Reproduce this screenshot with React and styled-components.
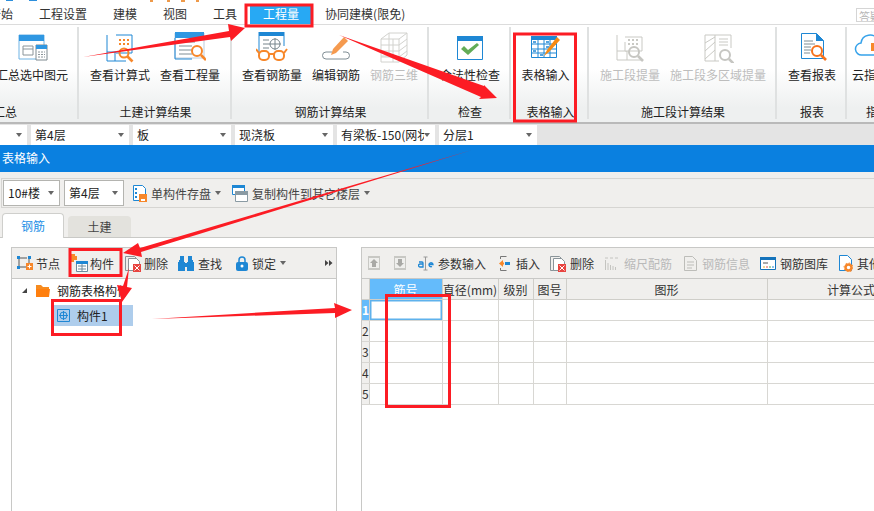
import React from "react";
import styled, { createGlobalStyle } from "styled-components";

const Global = createGlobalStyle`
  html, body { margin: 0; padding: 0; background: #fff; }
  body { font-family: "Noto Sans CJK SC", "Noto Sans", sans-serif; font-size: 12px; color: #222; }
`;

const Page = styled.div`
  position: relative; width: 874px; height: 511px; overflow: hidden; display: flex; flex-direction: column; background: #fff;
`;
const MenuBar = styled.div`
  height: 24px; flex: none; display: flex; align-items: flex-end; border-bottom: 1px solid #dcdcdc; background: #fff; position: relative; padding-left: 0;
`;
const MenuItem = styled.div`
  height: 20px; line-height: 19px; padding: 0 13px; white-space: nowrap; flex: none;
  color: ${p => (p.$active ? "#fff" : "#333")};
  background: ${p => (p.$active ? "#27a9f4" : "transparent")};
  margin-left: ${p => p.$ml || 0}px;
`;
const HelpBox = styled.div`
  margin-left: auto; margin-right: -6px; margin-bottom: 2px; width: 24px; height: 14px; border: 1px solid #d5d5d5; color: #b5b5b5; font-size: 11px; line-height: 14px; overflow: hidden; white-space: nowrap; padding-left: 2px; box-sizing: border-box;
`;
const Ribbon = styled.div`
  height: 97px; flex: none; display: flex; margin-left: -69px; background: linear-gradient(#fff 0%, #fff 45%, #eef0f0 85%, #eef0f0 100%);
`;
const Group = styled.div`
  width: ${p => p.$w}px; flex: none; box-sizing: border-box; position: relative; display: flex; flex-direction: column; align-items: center;
  &::after { content: ""; position: absolute; top: 2px; bottom: 3px; right: 0; width: ${p => (p.$last ? 0 : 2)}px; background: #dfe1e1; }
`;
const GroupActions = styled.div`
  flex: 1; width: 100%; box-sizing: border-box; display: flex; padding-top: 6px; padding-right: ${p => p.$pr || 0}px;
  justify-content: ${p => p.$justify || "center"};
`;
const GroupLabel = styled.div`
  height: 18px; line-height: 18px; margin-bottom: 1px; white-space: nowrap; padding-left: ${p => p.$pl || 0}px;
`;
const RibbonBtn = styled.div`
  padding: 0 5px; display: flex; flex-direction: column; align-items: center; flex: none; white-space: nowrap;
  color: ${p => (p.$off ? "#bdbdbd" : "#222")};
  svg { display: block; width: 32px; height: 32px; }
  span { margin-top: 4px; line-height: 16px; }
`;
const SelectorBar = styled.div`
  height: 23px; flex: none; box-sizing: border-box; padding-top: 3px; display: flex; gap: 4px; margin-left: -71px;
  background-image: linear-gradient(#b9b9b9 0, #b9b9b9 2px, #e4e4e4 2px);
`;
const Combo = styled.div`
  width: ${p => p.$w || 98}px; flex: none; box-sizing: border-box; background: #fff; height: ${p => p.$h || 20}px; line-height: ${p => (p.$h || 20) - 2}px; padding-left: 4px;
  display: flex; align-items: center; justify-content: space-between; padding-right: 5px; white-space: nowrap; overflow: hidden;
  border: ${p => (p.$bordered ? "1px solid #b4b4b0" : "none")};
  span { overflow: hidden; }
`;
const Caret = styled.i`
  flex: none; display: inline-block; width: 0; height: 0; border-left: 3.5px solid transparent; border-right: 3.5px solid transparent; border-top: 4px solid #666; margin-left: ${p => p.$ml || 0}px;
`;
const TitleBar = styled.div`
  height: 27px; flex: none; background: #0a80e0; color: #fff; line-height: 26px; padding-left: 2px;
`;
const Work = styled.div`
  flex: 1; background: #f0efed; padding-top: 6px; display: flex; flex-direction: column; min-height: 0;
`;
const SubToolbar = styled.div`
  height: 30px; margin-left: 1px; box-sizing: border-box; border: 1px solid #d6d5d2; border-right: none; display: flex; align-items: center; gap: 4px; padding-left: 1px;
`;
const SubItem = styled.div`
  display: flex; align-items: center; white-space: nowrap; margin-left: ${p => p.$ml || 0}px; color: #444;
  svg { margin-right: 4px; display: block; }
`;
const Tabs = styled.div`
  height: 30px; flex: none; display: flex; align-items: flex-end; gap: 4px; padding-left: 2px; box-sizing: border-box; border-bottom: 1px solid #c9c9c6;
`;
const Tab = styled.div`
  width: ${p => (p.$on ? 62 : 63)}px; height: ${p => (p.$on ? 25 : 21)}px; box-sizing: border-box; text-align: center; line-height: ${p => (p.$on ? 24 : 21)}px;
  border-radius: 4px 4px 0 0; color: ${p => (p.$on ? "#1d8fe6" : "#444")};
  background: ${p => (p.$on ? "#fff" : "#e3e2dd")};
  border: ${p => (p.$on ? "1px solid #cfcfcc" : "none")}; border-bottom: none;
  margin-bottom: ${p => (p.$on ? -1 : 0)}px;
`;
const TabBody = styled.div`
  flex: 1; background: #fff; display: flex; padding: 9px 0 0 11px; gap: 24px; min-height: 0;
`;
const LeftPanel = styled.div`
  width: 326px; flex: none; box-sizing: border-box; border: 1px solid #c8c8c6; border-bottom: none; display: flex; flex-direction: column;
`;
const RightPanel = styled.div`
  flex: 1; box-sizing: border-box; border: 1px solid #c8c8c6; border-right: none; border-bottom: none; display: flex; flex-direction: column; min-width: 0; overflow: hidden;
`;
const PanelToolbar = styled.div`
  height: 31px; flex: none; box-sizing: border-box; background: #f0efed; border-bottom: 1px solid #c8c8c6; display: flex; align-items: center; white-space: nowrap; padding-left: ${p => p.$pl}px; overflow: hidden;
`;
const Tool = styled.div`
  display: flex; align-items: center; flex: none; margin-left: ${p => p.$ml || 0}px; color: ${p => (p.$off ? "#b9b9b9" : "#333")};
  svg { display: block; flex: none; margin-right: ${p => (p.$gap === undefined ? 4 : p.$gap)}px; }
`;
const More = styled.svg`
  margin-left: auto; margin-right: 3px; display: block; flex: none;
`;
const Tree = styled.div`
  flex: 1; padding-top: 1px; background: #fff;
`;
const TreeRow = styled.div`
  height: 21px; display: flex; align-items: center; white-space: nowrap; padding-left: ${p => p.$pl}px; color: #222;
`;
const TreeLabel = styled.span`
  margin-left: 7px;
`;
const Expander = styled.i`
  width: 0; height: 0; margin-right: 9px; border-left: 5px solid transparent; border-bottom: 5px solid #444; display: block;
`;
const Selected = styled.div`
  width: 79px; height: 21px; margin: 4px 0 0 42px; background: #aecdec; display: flex; align-items: center; padding-left: 3px; box-sizing: border-box;
  svg { margin-right: 7px; display: block; }
`;
const Grid = styled.table`
  border-collapse: collapse; table-layout: fixed; width: 573px; flex: none; background: #fff;
  th { height: 20px; padding: 0; background: #f0efed; font-weight: 400; color: #333; border-right: 1px solid #cfcec9; border-bottom: 1px solid #cfcec9; white-space: nowrap; overflow: hidden; }
  td { height: 20px; padding: 0; border-right: 1px solid #d8d7d3; border-bottom: 1px solid #d8d7d3; }
`;
const GridCol = styled.col`
  width: ${p => p.$w}px;
`;
const HeadActive = styled.th`
  && { background: #64bbfb; color: #fff; }
`;
const RowHead = styled.td`
  && { background: ${p => (p.$on ? "#64bbfb" : "#f0efed")}; color: ${p => (p.$on ? "#fff" : "#333")}; font-weight: ${p => (p.$on ? 700 : 400)}; overflow: hidden; font-size: 12px; line-height: 20px; border-right: 1px solid #cfcec9; }
`;
const ActiveCell = styled.td`
  && { box-shadow: inset 0 0 0 1.5px #5fb2ec; }
`;
const Overlay = styled.svg`
  position: absolute; left: 0; top: 0; width: 874px; height: 511px; pointer-events: none;
`;

const B = "#1e87d4", O = "#f7872a", G = "#c9c9c4";

const IcoSummary = () => (
  <svg viewBox="0 0 32 32">
    <path d="M3 4h25v24H3z" fill="#fff" stroke="#6fb3e4" />
    <path d="M3 4h25v6H3z" fill="#2f97e2" />
    <path d="M7 15h10v9H7z" fill="none" stroke="#8a9499" /><path d="M7 18h10" stroke="#8a9499" />
    <path d="M20 14h11v15H20z" fill="#fff" stroke="#7e8a90" /><path d="M20 14h11v4H20z" fill="#2f97e2" />
    <path d="M22 21h7M22 23.5h7M22 26h7" stroke="#8a9499" strokeDasharray="2 1" />
  </svg>
);
const Lens = ({ x, y, c = O, r = 4.5 }) => (
  <g fill="none" stroke={c} strokeWidth="2">
    <circle cx={x} cy={y} r={r} /><path d={`M${x + r - 1} ${y + r - 1}l5 5`} strokeWidth="2.6" />
  </g>
);
const IcoCalc = () => (
  <svg viewBox="0 0 32 32">
    <path d="M3 4v26h19M3 21h11M11 21v9" fill="none" stroke={B} />
    <path d="M12 4h16v18H12" fill="#fff" stroke={B} />
    <path d="M15 8h2v2h-2zM19 8h2v2h-2zM23 8h2v2h-2zM15 12h2v2h-2zM19 12h2v2h-2zM23 12h2v2h-2z" fill={O} />
    <Lens x={20} y={22} />
  </svg>
);
const IcoQty = () => (
  <svg viewBox="0 0 32 32">
    <path d="M1 2h29v25H1z" fill="#fff" stroke="#bcd" />
    <path d="M1 1h29v6H1z" fill="#2f97e2" />
    <path d="M5 11h16M5 15h13M5 19h13M5 23h13" stroke="#7f8d94" />
    <path d="M1 7v21h17" fill="none" stroke={B} />
    <Lens x={23} y={20} r={5} />
  </svg>
);
const IcoRebarQty = () => (
  <svg viewBox="0 0 32 32">
    <path d="M3 2h25v22H3z" fill="#fff" />
    <path d="M3 1h25v4H3z" fill={B} /><path d="M3 1v22M28 1v14" stroke={B} />
    <path d="M7 9h6M7 13h6M7 17h6" stroke="#77858c" />
    <circle cx="19" cy="13" r="5" fill="none" stroke="#77858c" /><path d="M19 7v12M13 13h12" stroke="#77858c" />
    <rect x="3" y="20" width="10" height="9" rx="4" fill="#fff" stroke={O} strokeWidth="2" />
    <rect x="18" y="20" width="10" height="9" rx="4" fill="#fff" stroke={O} strokeWidth="2" />
    <path d="M13 23h5M3 22L0 18M28 22l3-4" stroke={O} strokeWidth="2" />
  </svg>
);
const IcoEdit = () => (
  <svg viewBox="0 0 32 32">
    <path d="M12 21H6a3.5 3.5 0 000 7h20a3.5 3.5 0 000-7h-3" fill="none" stroke="#7f8d94" />
    <path d="M11 24l2-6L24 6l4 4-12 12z" fill="#f59a4f" />
  </svg>
);
const Ico3D = () => (
  <svg viewBox="0 0 32 32" fill="none" stroke="#d2d2ce">
    <path d="M3 8l8-6h18v22l-8 7H3zM3 8h18v23M21 8l8-6M11 2v23M3 14h18l8-6M3 20h18l8-6M3 26h18l8-6M11 25H3M15 8v23" />
  </svg>
);
const IcoCheck = () => (
  <svg viewBox="0 0 32 32">
    <path d="M3.500 5.500h25v23h-25z" fill="#fff" stroke={B} />
    <path d="M3 5h26v5H3z" fill={B} />
    <path d="M7 18l3-3 4 4 9-7 2 2-11 10z" fill="#63ac57" />
  </svg>
);
const IcoTable = () => (
  <svg viewBox="0 0 32 32">
    <path d="M2.500 5.500h25v21h-25z" fill="#fff" stroke={B} />
    <path d="M2 5h26v4H2z" fill={B} />
    <path d="M2 13h26M2 18h26M2 22h26M9 9v18M15 9v18M21 9v18" stroke={B} />
    <path d="M4 11h3M17 11h3M4 20h3M11 24h3M17 16h3" stroke={B} strokeWidth="1.500" />
    <path d="M15 25l3-6L28 6l3 3-11 12z" fill="#f78a12" />
  </svg>
);
const IcoSeg = () => (
  <svg viewBox="0 0 32 32" fill="none" stroke={G}>
    <path d="M3 4v25h24M3 20h10v9" />
    <path d="M11 6h17v14H11v-9" fill="#fff" />
    <path d="M14 9h2M18 9h2M22 9h2M14 13h2M18 13h2M22 13h2" strokeWidth="2" />
    <Lens x={20} y={21} c="#c6c6c2" r={5} />
  </svg>
);
const IcoMulti = () => (
  <svg viewBox="0 0 32 32" fill="none" stroke={G}>
    <path d="M3 4h26v13M3 4v26h14M13 4v26M3 12l10-6M3 20l10-9M3 28l10-9M17 8h9M17 11h9M17 14h9" />
    <Lens x={23} y={24} c="#c6c6c2" r={5} />
  </svg>
);
const IcoReport = () => (
  <svg viewBox="0 0 32 32">
    <path d="M5.500 2.500h15l7 7v18h-22z" fill="#fff" stroke={B} />
    <path d="M20 2l8 8h-8z" fill={B} />
    <path d="M8 10h9M8 13h11M8 16h7M8 19h7M8 22h6" stroke="#7f8d94" />
    <Lens x={21} y={20} c="#f6721c" r={5} />
  </svg>
);
const IcoCloud = () => (
  <svg viewBox="0 0 32 32" fill="none">
    <path d="M8 24a6 6 0 01-1-12 9 9 0 0117-3 8 8 0 012 15z" stroke="#36a2ea" strokeWidth="1.500" />
    <path d="M17 12h14v8H17z" fill={O} />
  </svg>
);

const S = ({ w = 16, h = 16, children }) => (
  <svg width={w} height={h} viewBox={`0 0 ${w} ${h}`}>{children}</svg>
);
const SmSave = () => (
  <S w={15} h={18}>
    <path d="M1.500 1.500h9l3 3v12h-12z" fill="#fff" stroke={B} /><path d="M3 4h2v2H3zM3 8h2v2H3zM3 12h2v2H3z" fill={B} />
    <path d="M7 10h8v8H7z" fill={O} /><path d="M9 15h4v2H9z" fill="#fff" />
  </S>
);
const SmCopy = () => (
  <S w={16} h={18}>
    <path d="M.5 1.500h12v9H.5z" fill="#fff" stroke={B} /><path d="M0 1h13v3H0z" fill={B} />
    <path d="M3.500 7.500h12v10h-12z" fill="#fff" stroke="#8a9aa3" /><path d="M3 7h13v4H3z" fill="#8a9aa3" />
  </S>
);
const SmNode = () => (
  <S w={16} h={14}>
    <path d="M2 2h10v9H2z" fill="none" stroke="#555" strokeDasharray="8 2" />
    <path d="M0 0h3v3H0zM11 0h3v3h-3zM0 10h3v3H0z" fill={B} />
    <path d="M9 7h7v7H9z" fill={O} /><path d="M12.500 8.500v4M10.500 10.500h4" stroke="#fff" />
  </S>
);
const SmComp = () => (
  <S w={17} h={18}>
    <path d="M0 0h4v2h2v4H3v2H0z" fill={O} />
    <path d="M5.500 7.500h11v10h-11z" fill="#fff" stroke="#6e8a9c" /><path d="M5 7h12v3H5z" fill={B} />
    <path d="M7 12h8M7 15h8M11 10v7" stroke="#6e8a9c" />
  </S>
);
const SmDel = ({ w = 18 }) => (
  <S w={w} h={17}>
    <path d="M.5 1.500h9l3 3v11H.5z" fill="none" stroke="#8a9499" /><path d="M3.500 3.500h8l3 3v9h-11z" fill="#fff" stroke="#8a9499" />
    <path d="M8 9h8v8H8z" fill="#e8433f" /><path d="M9.500 10.500l5 5M14.500 10.500l-5 5" stroke="#fff" />
  </S>
);
const SmFind = () => (
  <S w={16} h={15}>
    <path d="M2 0h4v4H2zM10 0h4v4h-4zM1 4h5v2H1zM10 4h5v2h-5zM0 6h7v9H0zM9 6h7v9H9zM7 7h2v4H7z" fill={B} />
  </S>
);
const SmLock = () => (
  <S w={12} h={15}>
    <path d="M3 7V4a3 3 0 016 0v3" fill="none" stroke={B} strokeWidth="1.500" />
    <rect x="0" y="6" width="12" height="9" rx="2" fill={B} /><circle cx="6" cy="10" r="1.500" fill="#fff" />
  </S>
);
const SmFolder = () => (
  <S w={14} h={12}>
    <path d="M0 0h5l2 2h6v3H0z" fill="#f68b1f" /><path d="M0 4h14l-1 8H0z" fill="#ff7f0e" />
  </S>
);
const SmNodeBox = () => (
  <S w={13} h={13}>
    <path d="M.5.500h12v12H.5z" fill="none" stroke={B} /><circle cx="6.500" cy="6.500" r="3.500" fill="none" stroke={B} />
    <path d="M6.500 2v9M2 6.500h9" stroke={B} />
  </S>
);
const SmUp = ({ down }) => (
  <S w={12} h={16}>
    <path d="M0 1h12v14H0z" fill="#c8c8c4" /><path d="M1 3h10v10H1z" fill="#efefed" />
    <path d={down ? "M4 4h4v4h2l-4 4-4-4h2z" : "M4 12h4V8h2L6 4 2 8h2z"} fill="#a9a9a6" />
  </S>
);
const SmParam = () => (
  <S w={16} h={15}>
    <path d="M7.500 1v13M5.500 1h4M5.500 14h4" stroke="#999" />
    <path d="M1 6h3a1 1 0 011 1v4H2a1.500 1.500 0 010-3h3M11 8.500h4a2 2 0 10-1 2" fill="none" stroke={B} strokeWidth="1.300" />
  </S>
);
const SmInsert = () => (
  <S w={12} h={15}>
    <path d="M5 4L1 7.500 5 11z" fill={O} /><path d="M3 6.500h3v2H3z" fill={O} />
    <path d="M7 6h5v3H7z" fill={B} /><path d="M2.500 3V.500h6M2.500 12v2.500h6" fill="none" stroke="#777" />
  </S>
);
const SmScale = () => (
  <S w={13} h={15}>
    <path d="M.5 14V4M3 14V7M5.500 14V9M8 14V10M10.500 14V11M0 2h3M5 2h3M10 2h3" stroke="#c4c4c0" />
  </S>
);
const SmInfo = () => (
  <S w={13} h={15}>
    <path d="M.5.500h8l4 4v10H.5z" fill="none" stroke="#bdbdb9" /><path d="M3 6h7M3 9h7M3 12h5" stroke="#bdbdb9" />
  </S>
);
const SmLib = () => (
  <S w={16} h={13}>
    <path d="M.5.500h15v12H.500z" fill="#fff" stroke="#1473bb" /><path d="M0 0h16v3H0z" fill="#1473bb" />
    <path d="M3 6h5" stroke="#555" /><path d="M3 10h2" stroke="#e4b22c" /><path d="M6 10h2" stroke="#e0534d" /><path d="M9 10h2" stroke="#4aa84f" /><path d="M12 10h2" stroke={B} />
  </S>
);
const SmOther = () => (
  <S w={14} h={17}>
    <path d="M.5.500h8l4 4v11H.5z" fill="#fff" stroke={B} />
    <circle cx="9.500" cy="12.500" r="3" fill="none" stroke={O} strokeWidth="2.500" />
    <circle cx="9.500" cy="12.500" r="4.500" fill="none" stroke={O} strokeDasharray="1.500 2" />
  </S>
);

const groups = [
  { w: 148, label: "汇总", justify: "flex-end", pr: 6, btns: [[<IcoSummary />, "汇总选中图元"]] },
  { w: 153, label: "土建计算结果", pr: 1, btns: [[<IcoCalc />, "查看计算式"], [<IcoQty />, "查看工程量"]] },
  { w: 197, label: "钢筋计算结果", pr: 1, btns: [[<IcoRebarQty />, "查看钢筋量"], [<IcoEdit />, "编辑钢筋"], [<Ico3D />, "钢筋三维", true]] },
  { w: 82, label: "检查", btns: [[<IcoCheck />, "合法性检查"]] },
  { w: 78, label: "表格输入", pr: 9, pl: 1, btns: [[<IcoTable />, "表格输入"]] },
  { w: 188, label: "施工段计算结果", btns: [[<IcoSeg />, "施工段提量", true], [<IcoMulti />, "施工段多区域提量", true]] },
  { w: 70, label: "报表", btns: [[<IcoReport />, "查看报表"]] },
  { w: 62, label: "指标", justify: "flex-start", last: true, btns: [[<IcoCloud />, "云指标"]] },
];

const columns = ["直径(mm)", "级别", "图号", "图形", "计算公式"];
const widths = [7, 73, 56, 35, 33, 201, 168];

const Red = "#fc1c24";
const Annotations = () => (
  <Overlay viewBox="0 0 874 511">
    <g fill="#2d8fdc">
      <rect x="6" y="0" width="7" height="1" /><rect x="29" y="0" width="8" height="1" />
    </g>
    <g fill="#ee9a4a">
      <rect x="150" y="0" width="3" height="2" /><rect x="167" y="0" width="3" height="2" /><rect x="181" y="0" width="4" height="2" /><rect x="196" y="0" width="3" height="2" />
    </g>
    <g fill="none" stroke={Red} strokeWidth="3">
      <rect x="246" y="5" width="66" height="21" />
      <rect x="514.500" y="34" width="61" height="87" />
      <rect x="70" y="249.500" width="51" height="26" />
      <rect x="52.500" y="300.500" width="68" height="34" />
      <rect x="386.500" y="295.500" width="63" height="111" />
    </g>
    <g fill={Red}>
      <polygon points="83,57 229,31 228,24 245,28 231,41 230,37" />
      <polygon points="339,35 484,86 484,85 497,98 479,99 481,97" />
      <polygon points="472,150 140,248 138,243 123,253 142,257 141,252" />
      <polygon points="129,268 127,287 132,288 122,302 117,285 123,286" />
      <polygon points="152,319 335,308 334,303 352,310 335,318 335,313" />
    </g>
  </Overlay>
);

export default function App() {
  return (
    <Page>
      <Global />
      <MenuBar>
        <MenuItem $ml={-24}>开始</MenuItem>
        <MenuItem>工程设置</MenuItem>
        <MenuItem>建模</MenuItem>
        <MenuItem>视图</MenuItem>
        <MenuItem>工具</MenuItem>
        <MenuItem $active>工程量</MenuItem>
        <MenuItem>协同建模(限免)</MenuItem>
        <HelpBox>答疑</HelpBox>
      </MenuBar>
      <Ribbon>
        {groups.map(g => (
          <Group key={g.label} $w={g.w} $last={g.last}>
            <GroupActions $justify={g.justify} $pr={g.pr}>
              {g.btns.map(([icon, text, off]) => (
                <RibbonBtn key={text} $off={off}>
                  {icon}
                  <span>{text}</span>
                </RibbonBtn>
              ))}
            </GroupActions>
            <GroupLabel $pl={g.pl}>{g.label}</GroupLabel>
          </Group>
        ))}
      </Ribbon>
      <SelectorBar>
        <Combo><span>楼层</span><Caret /></Combo>
        <Combo><span>第4层</span><Caret /></Combo>
        <Combo><span>板</span><Caret /></Combo>
        <Combo><span>现浇板</span><Caret /></Combo>
        <Combo><span>有梁板-150(网状)</span><Caret /></Combo>
        <Combo><span>分层1</span><Caret /></Combo>
      </SelectorBar>
      <TitleBar>表格输入</TitleBar>
      <Work>
        <SubToolbar>
          <Combo $w={57} $h={26} $bordered><span>10#楼</span><Caret /></Combo>
          <Combo $w={60} $h={26} $bordered><span>第4层</span><Caret /></Combo>
          <SubItem $ml={4}><SmSave />单构件存盘<Caret $ml={4} /></SubItem>
          <SubItem $ml={7}><SmCopy />复制构件到其它楼层<Caret $ml={4} /></SubItem>
        </SubToolbar>
        <Tabs>
          <Tab $on>钢筋</Tab>
          <Tab>土建</Tab>
        </Tabs>
        <TabBody>
          <LeftPanel>
            <PanelToolbar $pl={5}>
              <Tool $gap={3}><SmNode />节点</Tool>
              <Tool $ml={11} $gap={2}><SmComp />构件</Tool>
              <Tool $ml={11} $gap={1}><SmDel />删除</Tool>
              <Tool $ml={10} $gap={4}><SmFind />查找</Tool>
              <Tool $ml={14} $gap={4}><SmLock />锁定<Caret $ml={4} /></Tool>
              <More width="8" height="8" viewBox="0 0 8 8"><path d="M0 1l3.500 3L0 7zM4 1l3.500 3L4 7z" fill="#444" /></More>
            </PanelToolbar>
            <Tree>
              <TreeRow $pl={10}><Expander /><SmFolder /><TreeLabel>钢筋表格构件</TreeLabel></TreeRow>
              <Selected><SmNodeBox />构件1</Selected>
            </Tree>
          </LeftPanel>
          <RightPanel>
            <PanelToolbar $pl={6}>
              <Tool $gap={0}><SmUp /></Tool>
              <Tool $ml={14} $gap={0}><SmUp down /></Tool>
              <Tool $ml={12} $gap={4}><SmParam />参数输入</Tool>
              <Tool $ml={12} $gap={6}><SmInsert />插入</Tool>
              <Tool $ml={10} $gap={2}><SmDel />删除</Tool>
              <Tool $ml={11} $gap={6} $off><SmScale />缩尺配筋</Tool>
              <Tool $ml={12} $gap={5} $off><SmInfo />钢筋信息</Tool>
              <Tool $ml={10} $gap={4}><SmLib />钢筋图库</Tool>
              <Tool $ml={11} $gap={4}><SmOther />其他</Tool>
            </PanelToolbar>
            <Grid>
              <colgroup>
                {widths.map((w, i) => <GridCol key={i} $w={w} />)}
              </colgroup>
              <thead>
                <tr>
                  <th />
                  <HeadActive>筋号</HeadActive>
                  {columns.map(c => <th key={c}>{c}</th>)}
                </tr>
              </thead>
              <tbody>
                {[1, 2, 3, 4, 5].map(n => (
                  <tr key={n}>
                    <RowHead $on={n === 1}>{n}</RowHead>
                    {n === 1 ? <ActiveCell /> : <td />}
                    {columns.map(c => <td key={c} />)}
                  </tr>
                ))}
              </tbody>
            </Grid>
          </RightPanel>
        </TabBody>
      </Work>
      <Annotations />
    </Page>
  );
}
